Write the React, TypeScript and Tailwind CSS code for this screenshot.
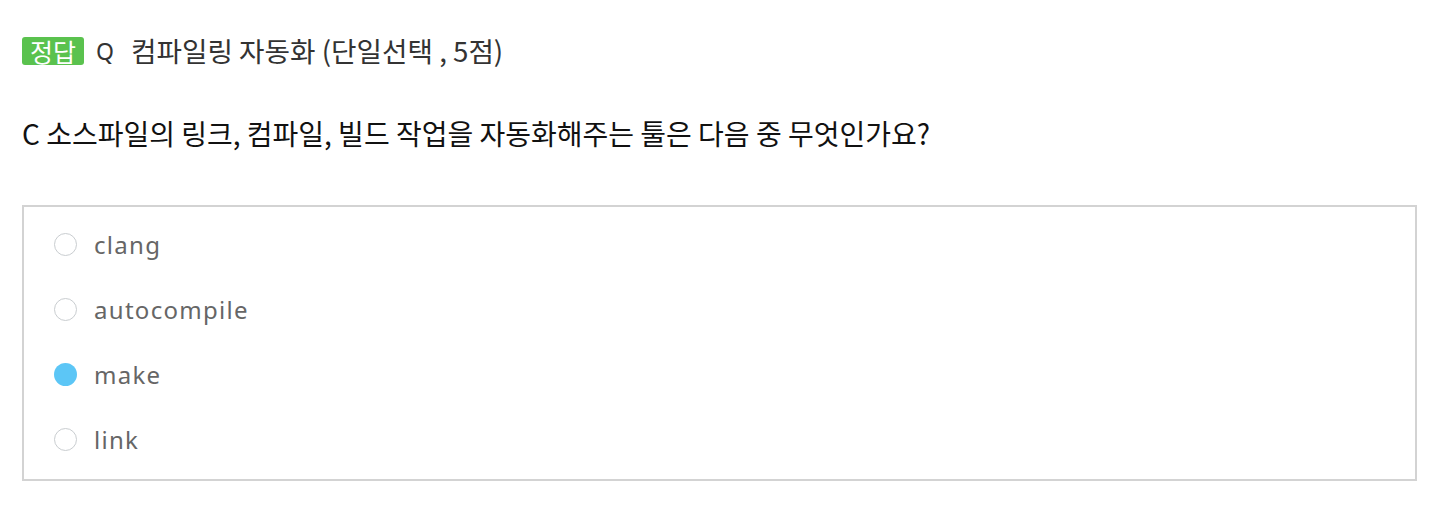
import React from "react";

const options = [
  { label: "clang", selected: false },
  { label: "autocompile", selected: false },
  { label: "make", selected: true },
  { label: "link", selected: false },
];

const KR = { fontFamily: "'Noto Sans CJK KR', 'Noto Sans', sans-serif" };
const LAT = { fontFamily: "'Noto Sans', 'Noto Sans CJK KR', sans-serif" };

export default function App() {
  return (
    <div className="bg-white w-[1452px] h-[514px] pt-[37px] pl-[22px] pr-[35px]" style={LAT}>
      <div className="flex items-center h-[28px]">
        <span
          className="flex items-center justify-center w-[62px] h-[28px] rounded-[3px] bg-[#5ac24e] text-white text-[25px] leading-none"
          style={KR}
        >
          정답
        </span>
        <span className="ml-[12px] text-[23px] text-[#333] leading-none">Q</span>
        <span className="ml-[17px] text-[27.7px] text-[#333] leading-none" style={KR}>
          컴파일링 자동화 (단일선택 , 5점)
        </span>
      </div>
      <div className="mt-[50px] h-[36px] flex items-center text-[28px] text-[#111] leading-none" style={KR}>
        C 소스파일의 링크, 컴파일, 빌드 작업을 자동화해주는 툴은 다음 중 무엇인가요?
      </div>
      <div className="mt-[54px] border-2 border-[#d3d3d3] pt-[5px] pb-[7px] pl-[30px]">
        {options.map((o) => (
          <div key={o.label} className="flex items-center h-[65px]">
            {o.selected ? (
              <span className="w-[23px] h-[23px] rounded-full bg-[#5cc6f6]" />
            ) : (
              <span className="w-[23px] h-[23px] rounded-full border-[1.5px] border-[#c9cdd0] bg-white" />
            )}
            <span className="ml-[17px] text-[24px] tracking-[1.3px] text-[#666] leading-none">
              {o.label}
            </span>
          </div>
        ))}
      </div>
    </div>
  );
}
